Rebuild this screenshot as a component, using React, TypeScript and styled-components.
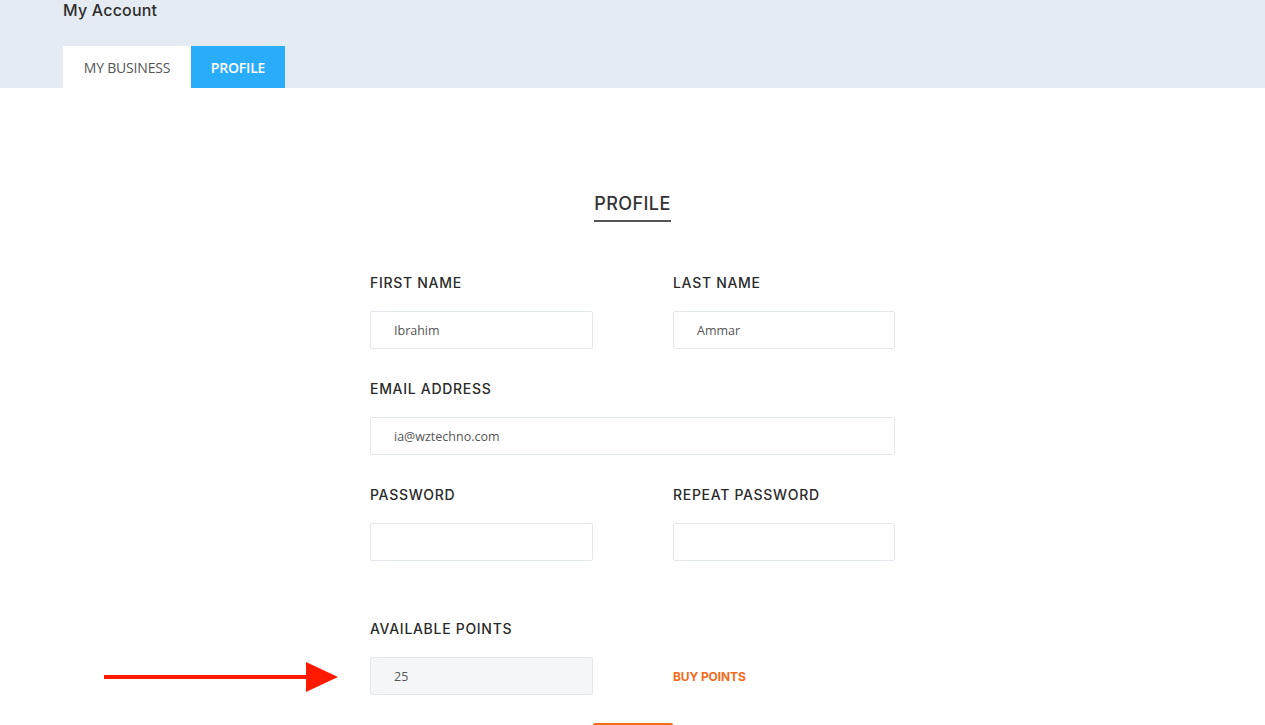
import React from "react";
import styled, { createGlobalStyle } from "styled-components";

const GlobalStyle = createGlobalStyle`
  html, body {
    margin: 0;
    padding: 0;
    background: #fff;
    overflow: hidden;
  }
  body {
    font-family: "Open Sans", "Liberation Sans", sans-serif;
  }
`;

const SPage = styled.div`
  width: 1265px;
  height: 725px;
  overflow: hidden;
`;

const SHeader = styled.div`
  background: #e4ebf3;
  height: 88px;
  padding: 0 63px;
  box-sizing: border-box;
  display: flex;
  flex-direction: column;
`;

const STitle = styled.h1`
  margin: 0;
  font-family: Inter, "Liberation Sans", sans-serif;
  font-weight: 500;
  font-size: 16px;
  line-height: 20px;
  letter-spacing: 0.2px;
  color: #2e2e2e;
`;

const STabs = styled.div`
  display: flex;
  margin-top: 26px;
`;

const STab = styled.div<{ active?: boolean; width: number }>`
  width: ${(p) => p.width}px;
  height: 42px;
  display: flex;
  align-items: center;
  justify-content: center;
  font-size: 14px;
  text-transform: uppercase;
  letter-spacing: -0.2px;
  background: ${(p) => (p.active ? "#29acfa" : "#fff")};
  color: ${(p) => (p.active ? "#fff" : "#555")};
  font-weight: ${(p) => (p.active ? 600 : 400)};
`;

const SMain = styled.div`
  display: flex;
  flex-direction: column;
  align-items: center;
  padding-top: 105px;
`;

const SHeading = styled.h2`
  margin: 0;
  font-family: Inter, "Liberation Sans", sans-serif;
  font-weight: 500;
  font-size: 18px;
  line-height: 22px;
  letter-spacing: 0.4px;
  color: #333;
  padding-bottom: 5px;
  border-bottom: 2px solid #555;
`;

const SForm = styled.div`
  width: 525px;
  margin-top: 52px;
  display: grid;
  grid-template-columns: 223px 222px;
  column-gap: 80px;
`;

const SField = styled.div<{ full?: boolean; gapTop?: number }>`
  display: flex;
  flex-direction: column;
  grid-column: ${(p) => (p.full ? "1 / -1" : "auto")};
  margin-top: ${(p) => p.gapTop ?? 0}px;
`;

const SLabel = styled.label`
  font-family: Inter, "Liberation Sans", sans-serif;
  font-weight: 500;
  font-size: 14px;
  line-height: 18px;
  letter-spacing: 0.7px;
  color: #2a2a2a;
  text-transform: uppercase;
`;

const SInput = styled.div<{ disabled?: boolean }>`
  margin-top: 19px;
  height: 38px;
  box-sizing: border-box;
  border: 1px solid #e2e8ee;
  border-radius: 2px;
  background: ${(p) => (p.disabled ? "#f5f6f7" : "#fff")};
  padding: 0 23px;
  display: flex;
  align-items: center;
  font-size: 12.5px;
  color: #555;
`;

const SPointsRow = styled.div`
  display: flex;
  align-items: center;
  position: relative;
`;

const SBuyLink = styled.a`
  margin-top: 19px;
  height: 38px;
  display: flex;
  align-items: center;
  font-family: Inter, "Liberation Sans", sans-serif;
  font-size: 12px;
  font-weight: 700;
  color: #f26b1d;
  text-transform: uppercase;
  letter-spacing: -0.1px;
  cursor: pointer;
`;

const SArrow = styled.svg`
  position: absolute;
  left: -266px;
  top: 23px;
`;

const SSubmit = styled.div`
  grid-column: 1 / -1;
  justify-self: center;
  margin-top: 28px;
  width: 80px;
  height: 3px;
  background: #f26b1d;
  border-radius: 2px 2px 0 0;
`;

export default function App() {
  return (
    <SPage>
      <GlobalStyle />
      <SHeader>
        <STitle>My Account</STitle>
        <STabs>
          <STab width={128}>My Business</STab>
          <STab width={94} active>
            Profile
          </STab>
        </STabs>
      </SHeader>
      <SMain>
        <SHeading>PROFILE</SHeading>
        <SForm>
          <SField>
            <SLabel>First Name</SLabel>
            <SInput>Ibrahim</SInput>
          </SField>
          <SField>
            <SLabel>Last Name</SLabel>
            <SInput>Ammar</SInput>
          </SField>
          <SField full gapTop={31}>
            <SLabel>Email Address</SLabel>
            <SInput>ia@wztechno.com</SInput>
          </SField>
          <SField gapTop={31}>
            <SLabel>Password</SLabel>
            <SInput />
          </SField>
          <SField gapTop={31}>
            <SLabel>Repeat Password</SLabel>
            <SInput />
          </SField>
          <SField gapTop={59}>
            <SLabel>Available Points</SLabel>
            <SPointsRow>
              <SArrow width="234" height="32" viewBox="0 0 234 32">
                <rect x="0" y="14" width="206" height="4" fill="#fe1a00" />
                <polygon points="202,1 234,16 202,31" fill="#fe1a00" />
              </SArrow>
              <SInput disabled style={{ flex: 1 }}>
                25
              </SInput>
            </SPointsRow>
          </SField>
          <SField gapTop={59}>
            <SLabel>&nbsp;</SLabel>
            <SBuyLink>Buy Points</SBuyLink>
          </SField>
          <SSubmit />
        </SForm>
      </SMain>
    </SPage>
  );
}
